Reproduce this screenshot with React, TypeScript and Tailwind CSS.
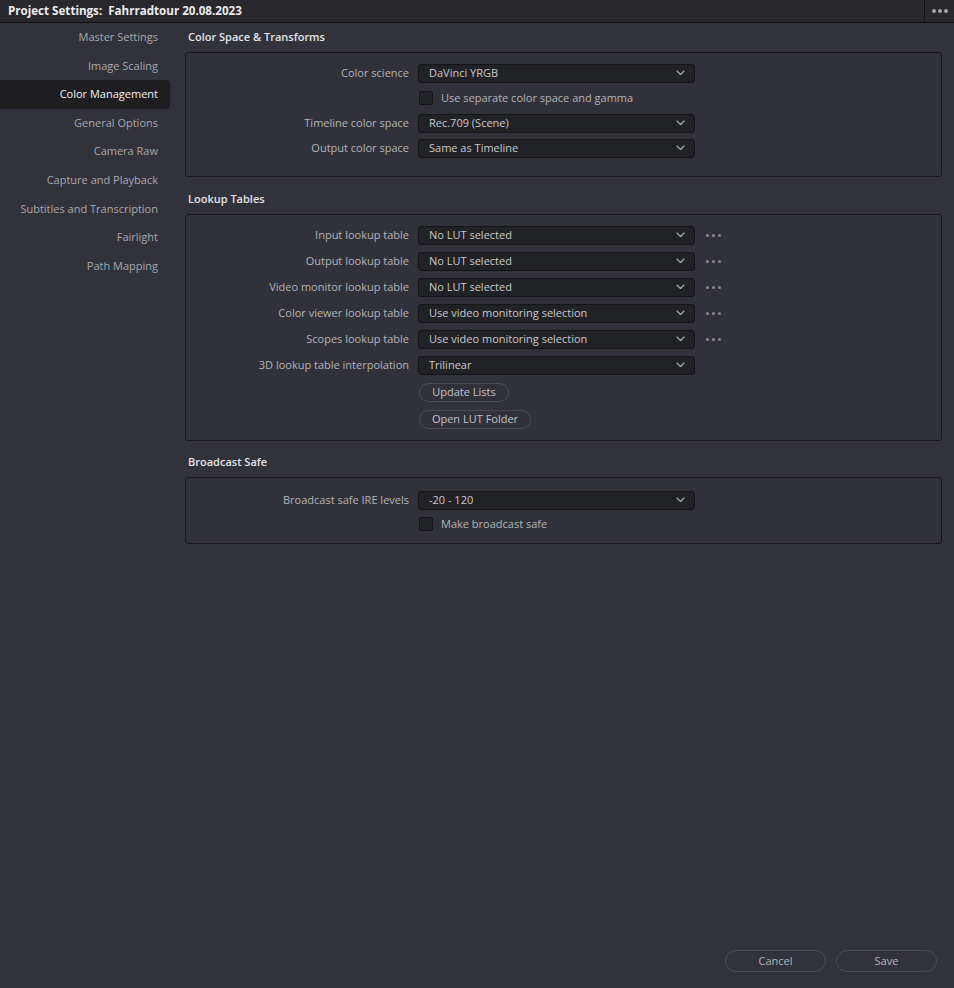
import React from "react";

const font = { fontFamily: '"Open Sans", "Noto Sans", "Liberation Sans", sans-serif' };

function Chevron() {
  return (
    <svg width="9" height="6" viewBox="0 0 9 6" className="shrink-0">
      <path d="M1 1 L4.5 4.5 L8 1" fill="none" stroke="#b0b0b5" strokeWidth="1.1" strokeLinecap="round" strokeLinejoin="round" />
    </svg>
  );
}

function Dots({ className = "", big }: { className?: string; big?: boolean }) {
  const d = big ? "w-[4px] h-[4px] bg-[#a4a4aa]" : "w-[3px] h-[3px] bg-[#8a8a90]";
  return (
    <div className={`flex items-center ${big ? "gap-[2px]" : "gap-[3px]"} ${className}`}>
      <span className={`${d} rounded-full`} />
      <span className={`${d} rounded-full`} />
      <span className={`${d} rounded-full`} />
    </div>
  );
}

function Select({ label, value, dots }: { label: string; value: string; dots?: boolean }) {
  return (
    <div className="flex items-center h-[18px]">
      <div className="w-[232px] pr-[9px] text-right text-[11px] text-[#b4b4b8] whitespace-nowrap">{label}</div>
      <div className="w-[277px] h-[19px] bg-[#212226] border border-[#151518] rounded-[3px] flex items-center justify-between pl-[10px] pr-[9px] text-[11px] text-[#c9c9cc]">
        <span className="whitespace-nowrap">{value}</span>
        <Chevron />
      </div>
      {dots && <Dots className="ml-[11px]" />}
    </div>
  );
}

function Check({ label }: { label: string }) {
  return (
    <div className="flex items-center h-[18px]">
      <div className="w-[232px]" />
      <div className="w-[14px] h-[14px] bg-[#232428] border border-[#151518] rounded-[2px] ml-[1px]" />
      <span className="ml-[8px] text-[11px] text-[#b4b4b8] whitespace-nowrap">{label}</span>
    </div>
  );
}

function Pill({ children, w }: { children: React.ReactNode; w: string }) {
  return (
    <div className={`${w} h-[19px] rounded-full border border-[#4a4b52] flex items-center justify-center text-[11px] text-[#c3c3c7]`}>
      {children}
    </div>
  );
}

function Header({ children, h }: { children: React.ReactNode; h: string }) {
  return (
    <div className={`${h} flex items-end pb-[7px] pl-[3px] text-[11px] leading-[16px] font-semibold text-[#e4e4e6]`}>{children}</div>
  );
}

const navItems = [
  "Master Settings",
  "Image Scaling",
  "Color Management",
  "General Options",
  "Camera Raw",
  "Capture and Playback",
  "Subtitles and Transcription",
  "Fairlight",
  "Path Mapping",
];

export default function App() {
  return (
    <div className="w-[954px] h-[988px] bg-[#31323a] flex flex-col overflow-hidden" style={font}>
      <div className="h-[23px] bg-[#28282d] border-b border-[#121214] flex items-center shrink-0">
        <div className="flex-1 pl-[8px] text-[11.6px] font-bold text-[#ececee] whitespace-pre">Project Settings:  Fahrradtour 20.08.2023</div>
        <div className="w-[30px] h-full border-l border-[#161618] flex items-center justify-center">
          <Dots big />
        </div>
      </div>
      <div className="flex-1 flex">
        <div className="w-[170px] shrink-0 flex flex-col">
          {navItems.map((n) => (
            <div
              key={n}
              className={`h-[28.6px] flex items-center justify-end pr-[12px] text-[11px] whitespace-nowrap ${
                n === "Color Management" ? "bg-[#1e1e21] text-[#f0f0f2] rounded-r-[3px]" : "text-[#a9a9ae]"
              }`}
            >
              {n}
            </div>
          ))}
        </div>
        <div className="flex-1 flex flex-col pl-[15px] pr-[12px]">
          <Header h="h-[29px]">Color Space &amp; Transforms</Header>
          <div className="border border-[#1a1a1d] rounded-[3px] bg-[#303139] pt-[11px] pb-[19px] flex flex-col gap-[7px]">
            <Select label="Color science" value="DaVinci YRGB" />
            <Check label="Use separate color space and gamma" />
            <Select label="Timeline color space" value="Rec.709 (Scene)" />
            <Select label="Output color space" value="Same as Timeline" />
          </div>
          <Header h="h-[37px]">Lookup Tables</Header>
          <div className="border border-[#1a1a1d] rounded-[3px] bg-[#303139] pt-[11px] pb-[11px] flex flex-col">
            <div className="flex flex-col gap-[8px]">
              <Select label="Input lookup table" value="No LUT selected" dots />
              <Select label="Output lookup table" value="No LUT selected" dots />
              <Select label="Video monitor lookup table" value="No LUT selected" dots />
              <Select label="Color viewer lookup table" value="Use video monitoring selection" dots />
              <Select label="Scopes lookup table" value="Use video monitoring selection" dots />
              <Select label="3D lookup table interpolation" value="Trilinear" />
            </div>
            <div className="flex flex-col gap-[8px] mt-[9px] pl-[233px]">
              <Pill w="w-[90px]">Update Lists</Pill>
              <Pill w="w-[112px]">Open LUT Folder</Pill>
            </div>
          </div>
          <Header h="h-[36px]">Broadcast Safe</Header>
          <div className="border border-[#1a1a1d] rounded-[3px] bg-[#303139] pt-[13px] pb-[10px] flex flex-col gap-[6px]">
            <Select label="Broadcast safe IRE levels" value="-20 - 120" />
            <Check label="Make broadcast safe" />
          </div>
          <div className="mt-auto pb-[16px] flex justify-end gap-[10px] pr-[5px]">
            <div className="w-[101px] h-[22px] rounded-full border border-[#4a4b52] flex items-center justify-center text-[11px] text-[#b4b4b8]">Cancel</div>
            <div className="w-[101px] h-[22px] rounded-full border border-[#4a4b52] flex items-center justify-center text-[11px] text-[#b4b4b8]">Save</div>
          </div>
        </div>
      </div>
    </div>
  );
}
